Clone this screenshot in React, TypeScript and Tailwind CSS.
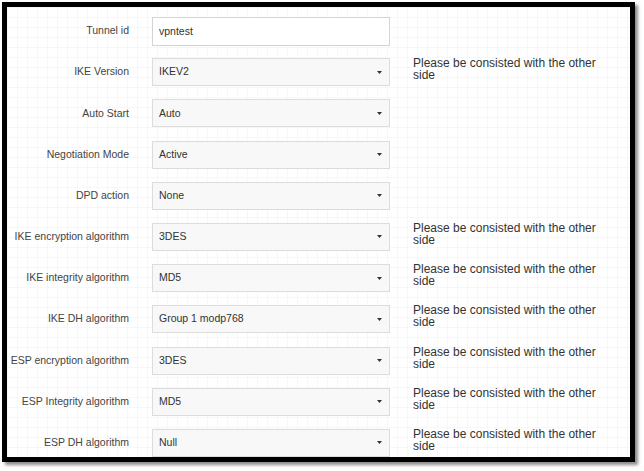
import React from 'react';

const NOTE = 'Please be consisted with the other side';

const rows: { label: string; value: string; kind: 'input' | 'select'; note?: boolean }[] = [
  { label: 'Tunnel id', value: 'vpntest', kind: 'input' },
  { label: 'IKE Version', value: 'IKEV2', kind: 'select', note: true },
  { label: 'Auto Start', value: 'Auto', kind: 'select' },
  { label: 'Negotiation Mode', value: 'Active', kind: 'select' },
  { label: 'DPD action', value: 'None', kind: 'select' },
  { label: 'IKE encryption algorithm', value: '3DES', kind: 'select', note: true },
  { label: 'IKE integrity algorithm', value: 'MD5', kind: 'select', note: true },
  { label: 'IKE DH algorithm', value: 'Group 1 modp768', kind: 'select', note: true },
  { label: 'ESP encryption algorithm', value: '3DES', kind: 'select', note: true },
  { label: 'ESP Integrity algorithm', value: 'MD5', kind: 'select', note: true },
  { label: 'ESP DH algorithm', value: 'Null', kind: 'select', note: true },
];

export default function App() {
  return (
    <div className="w-[644px] h-[471px] bg-white pt-[2px] pl-[2px] font-['Liberation_Sans',Arial,sans-serif]">
      <div className="w-[633px] h-[460px] border-[5px] border-black shadow-[3px_3px_3px_rgba(0,0,0,0.45)] bg-white bg-[linear-gradient(to_right,#f7f7f7_1px,transparent_1px),linear-gradient(to_bottom,#f7f7f7_1px,transparent_1px)] bg-size-[10px_10px] pt-[10px] overflow-hidden">
        {rows.map((r) => (
          <div key={r.label} className="flex h-[41.2px]">
            <div className="w-[122px] h-[28px] flex items-center justify-end text-[10.5px] text-[#444] whitespace-nowrap">
              {r.label}
            </div>
            {r.kind === 'input' ? (
              <div className="ml-[23px] w-[238px] h-[29px] border border-[#d4d4d4] bg-white flex items-center pl-[6px] text-[10.5px] text-[#333]">
                {r.value}
              </div>
            ) : (
              <div className="ml-[23px] w-[238px] h-[28px] border border-[#dcdcdc] bg-[#f8f8f8] flex items-center pl-[6px] pr-[6px] text-[10.5px] text-[#333]">
                <span className="flex-1">{r.value}</span>
                <svg width="5" height="3" viewBox="0 0 5 3" className="mr-[1px]">
                  <path d="M0 0h5L2.5 3z" fill="#333" />
                </svg>
              </div>
            )}
            {r.note && (
              <div className="ml-[23px] w-[200px] -mt-[1px] text-[12px] leading-[12px] text-[#333]">{NOTE}</div>
            )}
          </div>
        ))}
      </div>
    </div>
  );
}
